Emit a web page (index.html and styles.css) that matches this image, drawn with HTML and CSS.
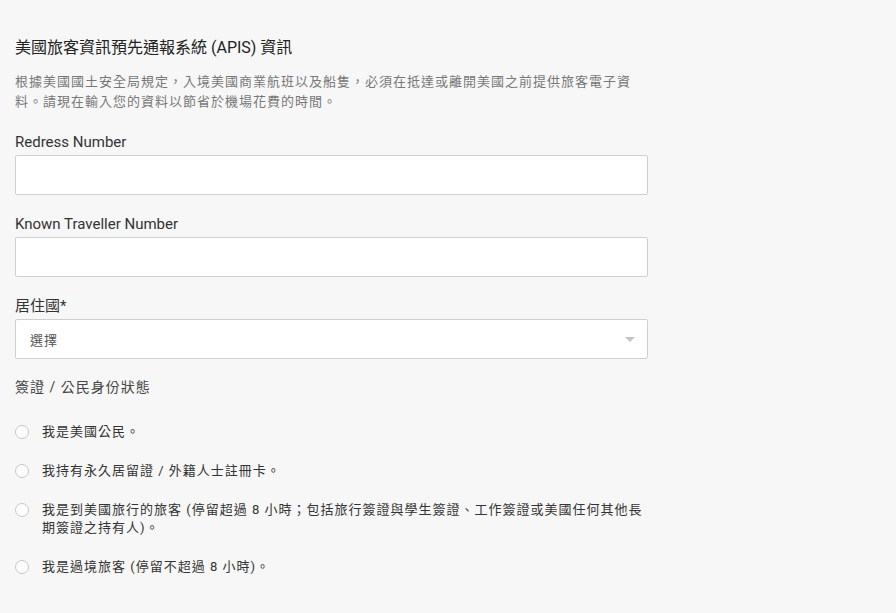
FILE: index.html
```html
<!DOCTYPE html>
<html lang="zh-Hant">
<head>
<meta charset="utf-8">
<title>APIS 資訊</title>
<link rel="stylesheet" href="styles.css">
</head>
<body>
<form class="apis">
  <h2 class="apis-title">美國旅客資訊預先通報系統 (APIS) 資訊</h2>
  <p class="apis-desc">根據美國國土安全局規定，入境美國商業航班以及船隻，必須在抵達或離開美國之前提供旅客電子資料。請現在輸入您的資料以節省於機場花費的時間。</p>

  <div class="field">
    <label class="field-label" for="redress">Redress Number</label>
    <input class="text-input" id="redress" type="text">
  </div>

  <div class="field">
    <label class="field-label" for="ktn">Known Traveller Number</label>
    <input class="text-input" id="ktn" type="text">
  </div>

  <div class="field">
    <label class="field-label" for="country">居住國*</label>
    <div class="select-box">
      <span class="select-value">選擇</span>
      <span class="select-caret"></span>
    </div>
  </div>

  <fieldset class="status">
    <legend class="status-legend">簽證 / 公民身份狀態</legend>
    <label class="radio-row"><span class="radio"></span><span class="radio-text">我是美國公民。</span></label>
    <label class="radio-row"><span class="radio"></span><span class="radio-text">我持有永久居留證 / 外籍人士註冊卡。</span></label>
    <label class="radio-row"><span class="radio"></span><span class="radio-text">我是到美國旅行的旅客 (停留超過 8 小時；包括旅行簽證與學生簽證、工作簽證或美國任何其他長期簽證之持有人)。</span></label>
    <label class="radio-row"><span class="radio"></span><span class="radio-text">我是過境旅客 (停留不超過 8 小時)。</span></label>
  </fieldset>
</form>
</body>
</html>
```
FILE: styles.css
```css
html, body {
  margin: 0;
  padding: 0;
  background: #f7f7f7;
}

body {
  font-family: Roboto, "Noto Sans CJK TC", sans-serif;
  color: #333;
}

.apis {
  width: 633px;
  padding: 37px 0 0 15px;
}

.apis-title {
  margin: 0;
  font-size: 16px;
  font-weight: 400;
  line-height: 22px;
  color: #222;
}

.apis-desc {
  margin: 13px 0 0;
  max-width: 622px;
  font-size: 13px;
  line-height: 20px;
  letter-spacing: 1px;
  color: #777;
}

.field {
  display: flex;
  flex-direction: column;
  margin-top: 20px;
}

.field + .field {
  margin-top: 19px;
}

.field-label {
  font-size: 15px;
  line-height: 20px;
  color: #333;
  margin-bottom: 3px;
}

.text-input,
.select-box {
  box-sizing: border-box;
  width: 633px;
  height: 40px;
  margin: 0;
  border: 1px solid #cfcfcf;
  border-radius: 2px;
  background: #fff;
  font: inherit;
}

.select-box {
  display: flex;
  align-items: center;
  justify-content: space-between;
  padding: 0 12px 0 14px;
}

.select-value {
  font-size: 13px;
  letter-spacing: 1px;
  color: #555;
}

.select-caret {
  width: 0;
  height: 0;
  border-left: 5px solid transparent;
  border-right: 5px solid transparent;
  border-top: 5px solid #c4c4c4;
  margin-top: 1px;
}

.status {
  margin: 18px 0 0;
  padding: 0;
  border: 0;
}

.status-legend {
  padding: 0;
  font-size: 14px;
  line-height: 20px;
  letter-spacing: 1px;
  color: #444;
}

.radio-row {
  display: flex;
  align-items: flex-start;
  gap: 13px;
  margin-top: 26px;
}

.radio-row + .radio-row {
  margin-top: 21px;
}

.radio {
  flex: none;
  box-sizing: border-box;
  width: 14px;
  height: 14px;
  margin-top: 2px;
  border: 1px solid #c8c8c8;
  border-radius: 50%;
  background: #fdfdfd;
}

.radio-text {
  font-size: 13px;
  line-height: 18px;
  letter-spacing: 1px;
  color: #333;
}
```
